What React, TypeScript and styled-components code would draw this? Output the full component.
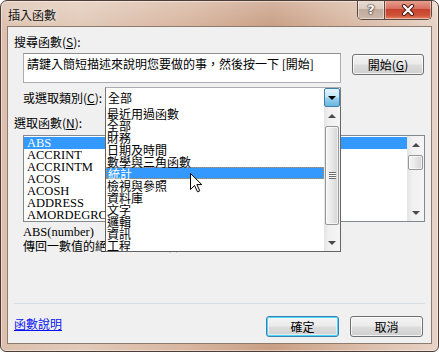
import React from 'react'
import styled, { createGlobalStyle, css } from 'styled-components'

const CJK = `"Noto Sans CJK TC", "Noto Sans CJK SC", sans-serif`
const SERIF = `"Liberation Serif", "Noto Sans CJK TC", serif`

const GlobalStyle = createGlobalStyle`
  html, body { margin: 0; padding: 0; background: #ffffff; }
  body { font-family: ${CJK}; font-size: 12px; color: #000; }
  * { box-sizing: border-box; }
`

const Window = styled.div`
  position: relative;
  width: 439px;
  height: 352px;
  border: 1px solid #4d3d35;
  border-radius: 7px 7px 6px 6px;
  overflow: hidden;
  display: flex;
  flex-direction: column;
  background:
    linear-gradient(180deg, rgba(255, 255, 255, 0.22) 0, rgba(255, 255, 255, 0) 26px),
    linear-gradient(90deg, #dcc0ad 0%, #e2cab9 18%, #d8b6a0 42%, #c99f85 62%, #d9b9a4 80%, #e7d3c6 100%);
  box-shadow: inset 0 0 0 1px rgba(255, 255, 255, 0.45);
`

const TitleBar = styled.div`
  height: 25px;
  flex: none;
  display: flex;
  align-items: flex-start;
  padding-left: 7px;
`

const Title = styled.div`
  margin-top: 7px;
  font-family: ${CJK};
  font-size: 12px;
  line-height: 14px;
  color: #111;
  text-shadow: 0 0 6px rgba(255, 255, 255, 0.9);
`

const CaptionGroup = styled.div`
  margin-left: auto;
  margin-right: 6px;
  margin-top: -1px;
  display: flex;
  height: 20px;
  border: 1px solid #5b4a41;
  border-top: none;
  border-radius: 0 0 5px 5px;
  overflow: hidden;
`

const CaptionButton = styled.div<{ $close?: boolean }>`
  height: 100%;
  display: flex;
  align-items: center;
  justify-content: center;
  width: ${p => (p.$close ? 47 : 26)}px;
  background: linear-gradient(180deg, #eadfd7 0%, #dccbbf 45%, #c2ab9c 50%, #cdb8aa 100%);
  box-shadow: inset 0 0 0 1px rgba(255, 255, 255, 0.45);
  ${p =>
    p.$close &&
    css`
      border-left: 1px solid #5b4a41;
      background: linear-gradient(180deg, #e9a596 0%, #d9705f 45%, #c5432e 50%, #cf5236 80%, #e3825f 100%);
    `}
`

const HelpGlyph = styled.span`
  font-family: "DejaVu Sans", sans-serif;
  font-weight: bold;
  font-size: 13px;
  line-height: 13px;
  color: #ffffff;
  text-shadow: 0 0 1px #3a2a22, 0 0 1px #3a2a22, 0 0 2px #3a2a22;
`

const Client = styled.div`
  flex: 1;
  margin: 0 6px 7px 6px;
  border: 1px solid #8f7b6e;
  background: #f0f0f0;
  display: flex;
  flex-direction: column;
`

const Label = styled.div<{ $indent: number; $top: number }>`
  margin: ${p => p.$top}px 0 0 ${p => p.$indent}px;
  height: 14px;
  line-height: 14px;
  font-size: 12px;
  white-space: nowrap;
`

const SearchRow = styled.div`
  margin-top: 4px;
  padding-left: 15px;
  display: flex;
  align-items: flex-start;
`

const TextBox = styled.div`
  width: 318px;
  height: 30px;
  background: #fff;
  border: 1px solid #abadb3;
  border-top-color: #8e8f8f;
  padding: 3px 0 0 3px;
  font-size: 12px;
  line-height: 14px;
  white-space: nowrap;
  overflow: hidden;
`

const Button = styled.div<{ $default?: boolean }>`
  width: 73px;
  height: 21px;
  display: flex;
  align-items: center;
  justify-content: center;
  font-size: 12px;
  border: 1px solid #707070;
  border-radius: 3px;
  background: linear-gradient(180deg, #f3f3f3 0%, #ebebeb 48%, #dddddd 52%, #cfcfcf 100%);
  box-shadow: inset 0 0 0 1px rgba(255, 255, 255, 0.75);
  ${p =>
    p.$default &&
    css`
      border-color: #3c7fb1;
      box-shadow: inset 0 0 0 1px #48d8fb, inset 0 0 0 2px rgba(255, 255, 255, 0.5);
    `}
`

const SearchButton = styled(Button)`
  margin: 1px 0 0 11px;
  width: 72px;
`

const CategoryRow = styled.div`
  margin-top: 4px;
  padding-left: 15px;
  display: flex;
  align-items: center;
  position: relative;
  z-index: 2;
`

const CategoryLabel = styled.div`
  width: 82px;
  line-height: 14px;
  white-space: nowrap;
`

const Combo = styled.div`
  position: relative;
  width: 236px;
  height: 21px;
  background: #fff;
  border: 1px solid #7a7a7a;
  border-top-color: #abadb3;
  display: flex;
  align-items: center;
  padding-left: 2px;
`

const ComboButton = styled.div`
  margin-left: auto;
  width: 16px;
  height: 19px;
  border: 1px solid #3c7fb1;
  border-radius: 2px;
  background: linear-gradient(180deg, #e5f4fc 0%, #c4e5f6 48%, #98d1ef 52%, #6cb6de 100%);
  display: flex;
  align-items: center;
  justify-content: center;
`

const TriDown = styled.span<{ $size?: number; $color?: string }>`
  width: 0;
  height: 0;
  border-left: ${p => p.$size ?? 4}px solid transparent;
  border-right: ${p => p.$size ?? 4}px solid transparent;
  border-top: ${p => p.$size ?? 4}px solid ${p => p.$color ?? '#000'};
`

const TriUp = styled.span`
  width: 0;
  height: 0;
  border-left: 4px solid transparent;
  border-right: 4px solid transparent;
  border-bottom: 4px solid #4a4a4a;
`

const DropList = styled.div`
  position: absolute;
  top: 100%;
  left: -1px;
  width: 236px;
  height: 145px;
  background: #fff;
  border: 1px solid #646464;
  border-top: none;
  display: flex;
`

const DropItems = styled.div`
  flex: 1;
  overflow: hidden;
`

const DropItem = styled.div<{ $active?: boolean }>`
  height: 12px;
  line-height: 12px;
  padding-left: 1px;
  font-size: 12px;
  white-space: nowrap;
  border: 1px solid transparent;
  border-left: none;
  border-right: none;
  ${p =>
    p.$active &&
    css`
      background: #3399ff;
      color: #fff;
      border: 1px dotted #d88a3a;
    `}
`

const ScrollBar = styled.div<{ $w: number }>`
  width: ${p => p.$w}px;
  flex: none;
  display: flex;
  flex-direction: column;
  background: linear-gradient(90deg, #e4e4e4 0%, #f0f0f0 30%, #f5f5f5 100%);
`

const ArrowButton = styled.div`
  height: 17px;
  flex: none;
  display: flex;
  align-items: center;
  justify-content: center;
`

const Thumb = styled.div<{ $top: number; $h: number }>`
  margin: ${p => p.$top}px 1px 0;
  height: ${p => p.$h}px;
  flex: none;
  border: 1px solid #979797;
  border-radius: 2px;
  background: linear-gradient(90deg, #f6f6f6 0%, #e9e9e9 45%, #d5d5d5 100%);
  box-shadow: inset 0 0 0 1px rgba(255, 255, 255, 0.6);
  display: flex;
  align-items: center;
  justify-content: center;
`

const Grip = styled.span`
  width: 7px;
  height: 7px;
  background: repeating-linear-gradient(180deg, #6d6d6d 0 1px, #ffffff 1px 2px);
`

const Track = styled.div`
  flex: 1;
`

const FuncList = styled.div`
  margin: 5px 0 0 15px;
  width: 402px;
  height: 87px;
  background: #fff;
  border: 1px solid #828790;
  display: flex;
  position: relative;
  z-index: 1;
`

const FuncItems = styled.div`
  flex: 1;
  padding-top: 1px;
  overflow: hidden;
`

const FuncItem = styled.div<{ $active?: boolean }>`
  height: 12px;
  line-height: 12px;
  padding-left: 3px;
  font-family: ${SERIF};
  font-size: 12.5px;
  white-space: nowrap;
  ${p =>
    p.$active &&
    css`
      background: #3399ff;
      color: #fff;
    `}
`

const Description = styled.div`
  margin: 3px 0 0 15px;
  display: flex;
  flex-direction: column;
`

const DescLine = styled.div<{ $serif?: boolean }>`
  height: 14px;
  line-height: 14px;
  white-space: nowrap;
  font-family: ${p => (p.$serif ? SERIF : CJK)};
  font-size: ${p => (p.$serif ? 12.5 : 12)}px;
`

const Filler = styled.div`
  flex: 1;
`

const Separator = styled.div`
  margin: 0 6px;
  height: 1px;
  background: #d5dfe5;
`

const Footer = styled.div`
  margin-top: 12px;
  padding: 0 8px 6px 6px;
  display: flex;
  align-items: center;
  gap: 11px;
`

const HelpLink = styled.a`
  color: #0a14f0;
  text-decoration: underline;
  font-size: 12px;
  line-height: 14px;
  margin-right: auto;
  margin-top: -5px;
  cursor: pointer;
`

const Cursor = styled.svg`
  position: absolute;
  left: 189px;
  top: 172px;
  z-index: 10;
`

const categories = ['最近用過函數', '全部', '財務', '日期及時間', '數學與三角函數', '統計', '檢視與參照', '資料庫', '文字', '邏輯', '資訊', '工程']
const functions = ['ABS', 'ACCRINT', 'ACCRINTM', 'ACOS', 'ACOSH', 'ADDRESS', 'AMORDEGRC']

function Scroller({ width, thumbTop, thumbHeight, grip }: { width: number; thumbTop: number; thumbHeight: number; grip?: boolean }) {
  return (
    <ScrollBar $w={width}>
      <ArrowButton><TriUp /></ArrowButton>
      <Thumb $top={thumbTop} $h={thumbHeight}>{grip && <Grip />}</Thumb>
      <Track />
      <ArrowButton><TriDown $color="#4a4a4a" /></ArrowButton>
    </ScrollBar>
  )
}

export default function App() {
  return (
    <>
      <GlobalStyle />
      <Window>
        <TitleBar>
          <Title>插入函數</Title>
          <CaptionGroup>
            <CaptionButton><HelpGlyph>?</HelpGlyph></CaptionButton>
            <CaptionButton $close>
              <svg width="14" height="12" viewBox="0 0 14 12">
                <path d="M3 2 L11 10 M11 2 L3 10" stroke="#4a2018" strokeWidth="4.2" strokeLinecap="round" />
                <path d="M3 2 L11 10 M11 2 L3 10" stroke="#ffffff" strokeWidth="2.2" strokeLinecap="round" />
              </svg>
            </CaptionButton>
          </CaptionGroup>
        </TitleBar>

        <Client>
          <Label $indent={6} $top={8}>搜尋函數(<u>S</u>):</Label>
          <SearchRow>
            <TextBox>請鍵入簡短描述來說明您要做的事，然後按一下 [開始]</TextBox>
            <SearchButton>開始(<u>G</u>)</SearchButton>
          </SearchRow>

          <CategoryRow>
            <CategoryLabel>或選取類別(<u>C</u>):</CategoryLabel>
            <Combo>
              全部
              <ComboButton><TriDown $size={4} /></ComboButton>
              <DropList>
                <DropItems>
                  {categories.map(c => (
                    <DropItem key={c} $active={c === '統計'}>{c}</DropItem>
                  ))}
                </DropItems>
                <Scroller width={16} thumbTop={2} thumbHeight={99} grip />
              </DropList>
            </Combo>
          </CategoryRow>

          <Label $indent={6} $top={8}>選取函數(<u>N</u>):</Label>
          <FuncList>
            <FuncItems>
              {functions.map((f, i) => (
                <FuncItem key={f} $active={i === 0}>{f}</FuncItem>
              ))}
            </FuncItems>
            <Scroller width={17} thumbTop={2} thumbHeight={15} />
          </FuncList>

          <Description>
            <DescLine $serif>ABS(number)</DescLine>
            <DescLine>傳回一數值的絕對值，即不含正負號的數值。</DescLine>
          </Description>

          <Filler />
          <Separator />
          <Footer>
            <HelpLink>函數說明</HelpLink>
            <Button $default>確定</Button>
            <Button>取消</Button>
          </Footer>
        </Client>

        <Cursor width="13" height="20" viewBox="0 0 13 20">
          <path d="M0.5 0.5 L0.5 16.5 L4.5 12.5 L7.5 18.8 L9.8 17.8 L6.9 11.6 L11.8 11.6 Z" fill="#ffffff" stroke="#000000" strokeWidth="1" strokeLinejoin="miter" />
        </Cursor>
      </Window>
    </>
  )
}
